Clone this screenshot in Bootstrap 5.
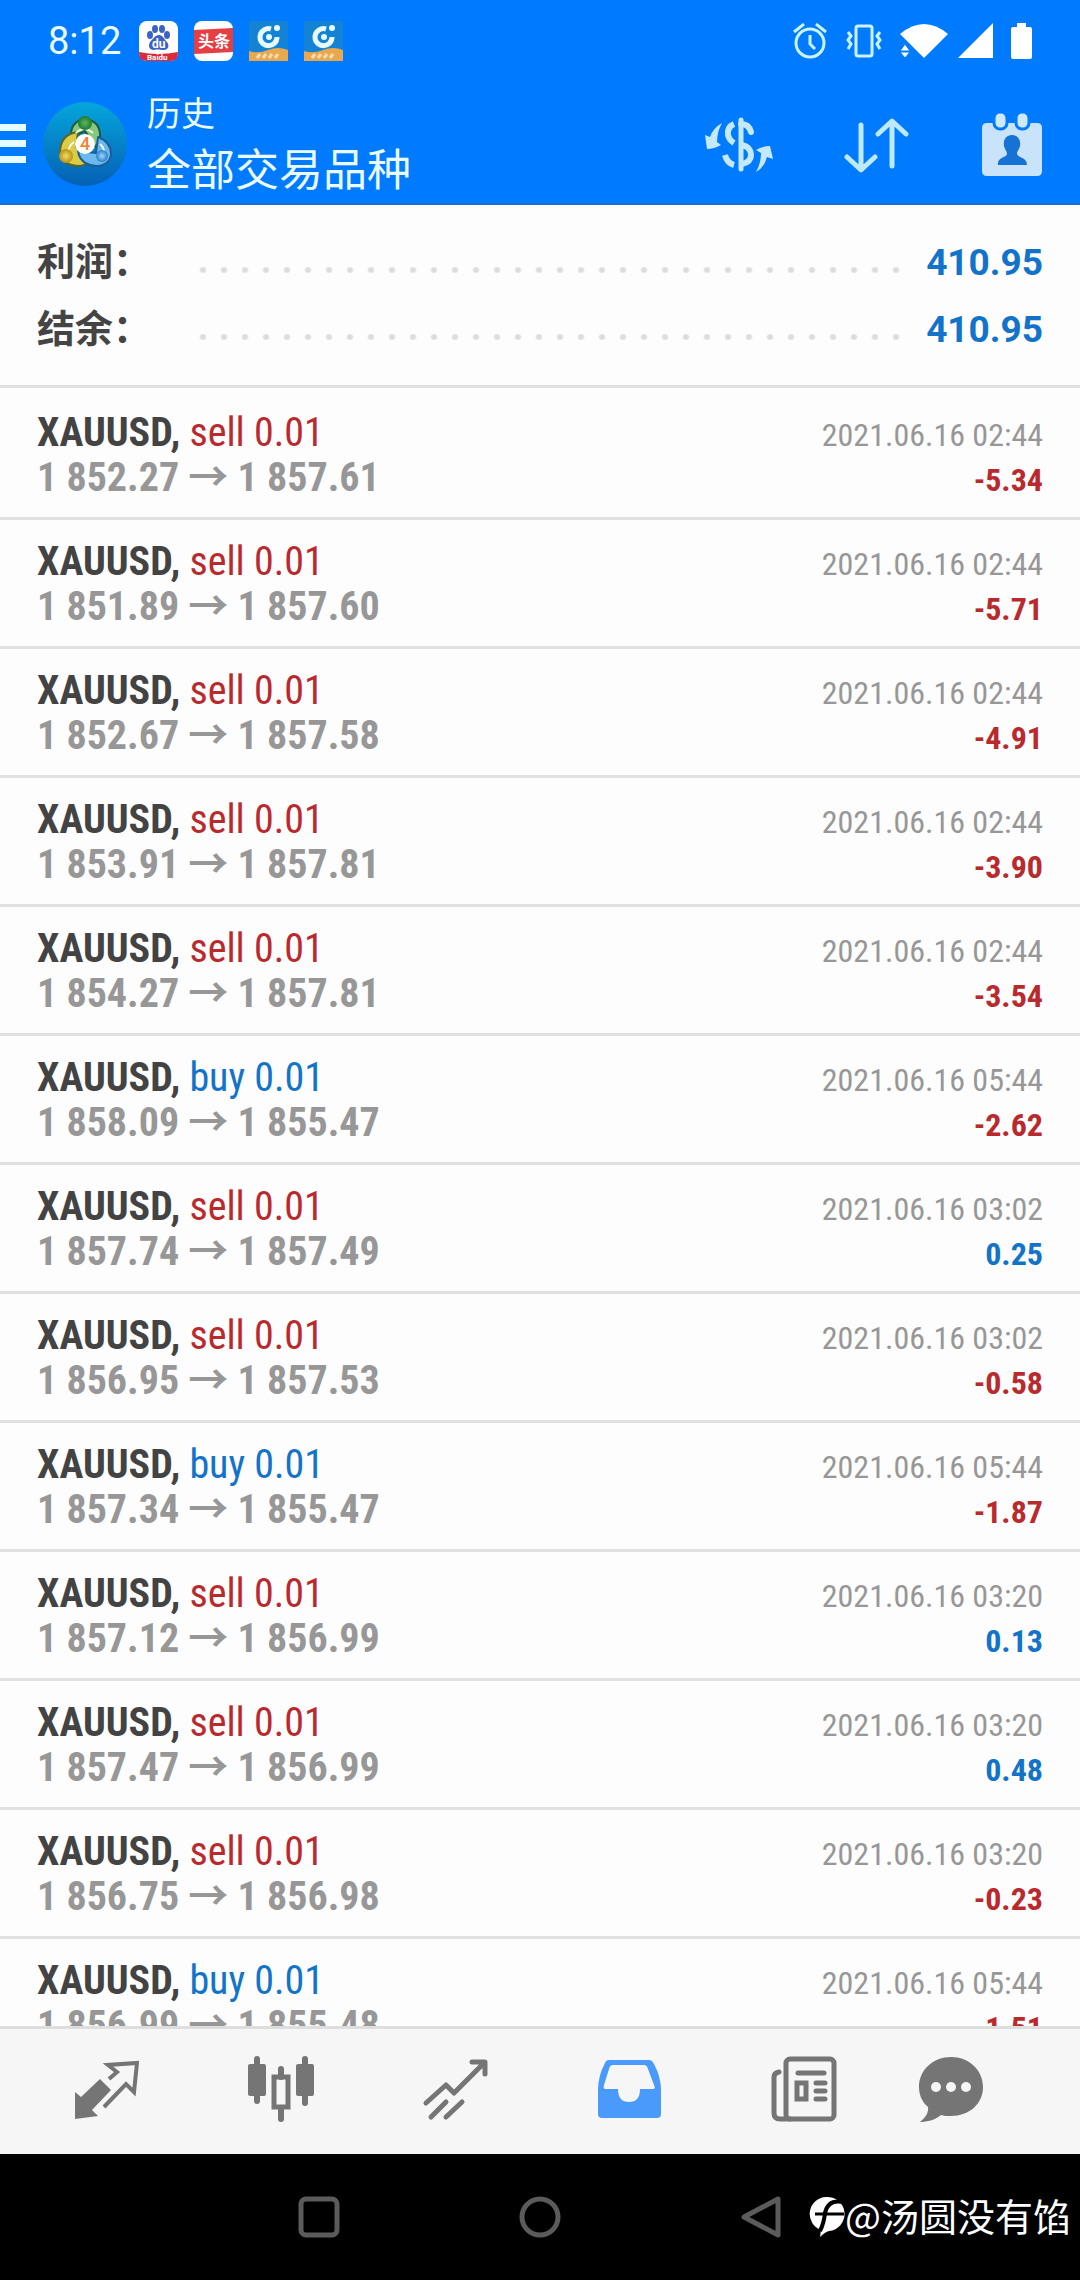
<!DOCTYPE html>
<html lang="zh-CN">
<head>
<meta charset="utf-8">
<meta name="viewport" content="width=device-width, initial-scale=1">
<title>历史 - 全部交易品种</title>
<link href="https://cdn.jsdelivr.net/npm/bootstrap@5.3.0/dist/css/bootstrap.min.css" rel="stylesheet">
<style>
:root{--app-blue:#007aff;--txt-blue:#1273c9;--txt-red:#b92a2e;--rule:#e1e1e1}
body{font-family:Roboto,"Noto Sans CJK SC",sans-serif;background:#000}
svg{display:block;flex:none}
.shell{height:100vh}
.app-top{background:var(--app-blue);border-bottom:2px solid #1b6fc4;color:#e9fbff}
.status-bar{height:80px;padding:2px 48px 0}
.clock{font-size:38px;line-height:44px;width:70px}
.notices{gap:16px;margin-left:21px}
.signals{gap:18px}
.signals .cell{margin-left:-8px}
.title-bar{padding:7px 38px 2px 0}
.title-bar .btn{border:0;border-radius:0;padding:0}
.small-title{font-size:34px;line-height:54px}
.big-title{font-size:44px;line-height:60px;font-weight:400}
.titles{margin-left:19px}
.tool-set{gap:70px}
.history{background:#fdfdfd;min-height:0}
.summary{padding:24px 37px 22px;border-bottom:3px solid var(--rule);margin-bottom:3px}
.sum-row{height:67px;font-size:38px;line-height:67px}
.sum-row dt{width:157px;color:#444;font-weight:700}
.sum-row dd{color:var(--txt-blue);font-weight:700;font-size:37px}
.dots{height:6px;margin-top:14px;margin-right:24px;background:radial-gradient(circle at 9px 3px,#dcdcdc 2px,transparent 4px) 0 0/21px 6px repeat-x}
.deal{height:129px;padding:19px 37px 0;border-bottom:3px solid var(--rule);font-family:"Roboto Condensed","Noto Sans CJK SC",sans-serif;font-size:40px;line-height:45px}
.deal>div{height:45px}
.symbol{color:#434343}
.prices{color:#979797}
.when{color:#979797;font-size:32px}
.gain{font-size:32px;font-weight:700}
.up{color:var(--txt-blue)}
.down{color:var(--txt-red)}
.tabs{height:128px;background:#f6f6f6;border-top:3px solid #dedede;padding:0 69px 6px 19px;color:#757575}
.tabs .btn{flex:174 1 0;min-width:0;padding:0;border:0;color:inherit}
.tabs .btn:last-child{flex-grow:120}
.tabs .btn.active{color:#4a9afc}
.system-bar{height:126px;gap:177px;background:#000}
.system-bar .btn{padding:0;border:0}
.credit{right:9px;bottom:38px;color:#fff;font-family:"Noto Sans CJK SC",sans-serif;font-size:38px;line-height:54px}
</style>
</head>
<body>
<div class="shell d-flex flex-column overflow-hidden">

<header class="app-top flex-shrink-0">
  <div class="status-bar d-flex align-items-center">
    <span class="clock">8:12</span>
    <div class="notices d-flex">
      <svg width="39" height="40" viewBox="0 0 39 40"><rect width="39" height="40" rx="8" fill="#fff"/><g fill="#3c62c4"><ellipse cx="11" cy="14" rx="3" ry="4"/><ellipse cx="16" cy="8" rx="3" ry="4"/><ellipse cx="23" cy="8" rx="3" ry="4"/><ellipse cx="28" cy="14" rx="3" ry="4"/><path d="M20 14c4 0 5 4 8 7 3 4 1 8-3 8-3 0-7-1-10 0-5 0-6-4-4-8 3-3 5-7 9-7z"/></g><text x="13" y="27" font-size="12" font-weight="700" fill="#fff">du</text><path d="M0 31q19 4 39 0v1q0 8-8 8H8q-8 0-8-8z" fill="#dd2a38"/><text x="8" y="39" font-size="8" font-weight="700" fill="#fff">Baidu</text></svg>
      <svg width="39" height="40" viewBox="0 0 39 40"><rect width="39" height="40" rx="8" fill="#fff"/><path d="M0 9 39 7v24L0 33z" fill="#e53e43"/><text x="4" y="26" font-size="16" font-weight="700" fill="#fff" font-family="Noto Sans CJK SC">头条</text></svg>
      <svg width="39" height="40" viewBox="0 0 39 40"><rect width="39" height="40" fill="#1483d6"/><path d="M22 8a8.500 8.500 0 1 0 6 8" fill="none" stroke="#e6fbff" stroke-width="5"/><circle cx="20" cy="16" r="3" fill="#e6fbff"/><circle cx="28" cy="7" r="3" fill="#e6fbff"/><path d="M0 30q9 3 19-1t20 0v11H0z" fill="#eaa84e"/><path d="M8 37l3-4m3 4l3-4m3 4l3-4m3 4l3-4" stroke="#f8ddb0" stroke-width="3"/></svg>
      <svg width="39" height="40" viewBox="0 0 39 40"><rect width="39" height="40" fill="#1483d6"/><path d="M22 8a8.500 8.500 0 1 0 6 8" fill="none" stroke="#e6fbff" stroke-width="5"/><circle cx="20" cy="16" r="3" fill="#e6fbff"/><circle cx="28" cy="7" r="3" fill="#e6fbff"/><path d="M0 30q9 3 19-1t20 0v11H0z" fill="#eaa84e"/><path d="M8 37l3-4m3 4l3-4m3 4l3-4m3 4l3-4" stroke="#f8ddb0" stroke-width="3"/></svg>
    </div>
    <div class="signals d-flex align-items-center ms-auto">
      <svg width="36" height="36" viewBox="0 0 36 36" fill="none" stroke="#c9f4ff" stroke-width="3"><circle cx="18" cy="20" r="14"/><path d="M18 12v9l5 5M2 9l10-8M34 9 24 1"/></svg>
      <svg width="36" height="36" viewBox="0 0 36 36" fill="none" stroke="#c9f4ff" stroke-width="3"><rect x="10" y="3" width="16" height="30" rx="2"/><path d="m2 9 3 4-3 4 3 4-3 5M34 9l-3 4 3 4-3 4 3 5"/></svg>
      <svg width="48" height="36" viewBox="0 0 48 36" fill="#fff"><path d="M0 11Q24-9 48 11L24 35z"/><path d="M0 28l5-7 5 7zM0 29h10l-5 6z" stroke="#007aff" stroke-width="1"/></svg>
      <svg class="cell" width="35" height="36" viewBox="0 0 35 36" fill="#fff"><path d="M35 0v35H0z"/></svg>
      <svg width="21" height="36" viewBox="0 0 21 36" fill="#fff"><path d="M6 0h9v4h4q2 0 2 2v28q0 2-2 2H2q-2 0-2-2V6q0-2 2-2h4z"/></svg>
    </div>
  </div>

  <div class="title-bar d-flex align-items-center">
    <button class="btn" type="button" aria-label="菜单"><svg width="26" height="40" viewBox="0 0 26 40" fill="#e4fbff"><path d="M0 0h26v7H0zM0 16h26v7H0zM0 32h26v7H0z"/></svg></button>
    <svg class="ms-3" width="86" height="86" viewBox="0 0 86 86">
      <defs>
        <linearGradient id="disc" x1="0" y1="0" x2="0" y2="1"><stop offset="0" stop-color="#05a6dc"/><stop offset="1" stop-color="#0560b4"/></linearGradient>
        <radialGradient id="gr"><stop offset="0" stop-color="#5fb558"/><stop offset="1" stop-color="#1c7a33"/></radialGradient>
        <radialGradient id="ye"><stop offset="0" stop-color="#f2dc6a"/><stop offset="1" stop-color="#b8920f"/></radialGradient>
        <radialGradient id="bl"><stop offset="0" stop-color="#9cd8ff"/><stop offset="1" stop-color="#2a80ca"/></radialGradient>
      </defs>
      <circle cx="43" cy="43" r="42" fill="url(#disc)"/>
      <g stroke-linejoin="round">
        <path d="M29 36Q28 21 42 18q15 1 16 15 1 9-4 13L43 30z" fill="#86c97c" stroke="#1d5a42" stroke-width="2"/>
        <path d="M36 31Q18 33 18 52q2 12 18 13 7 0 11-5L34 46z" fill="#dccb44" stroke="#5d6522" stroke-width="2"/>
        <path d="M36 50q2 14 19 15 13-1 14-12 0-12-13-17l-2 16z" fill="#6cb9ee" stroke="#1d5c96" stroke-width="2"/>
        <path d="M34 32q8-8 17 0M26 54q0-9 6-13M58 43q6 5 3 12" fill="none" stroke="#f3fbe8" stroke-width="2"/>
      </g>
      <circle cx="43" cy="22" r="7" fill="url(#gr)"/><circle cx="24" cy="55" r="7" fill="url(#ye)"/><circle cx="60" cy="55" r="6" fill="url(#bl)"/>
      <circle cx="43" cy="43" r="10" fill="#fff"/><text x="43" y="49" text-anchor="middle" font-size="18" font-weight="500" fill="#ee8434">4</text>
    </svg>
    <div class="titles">
      <div class="small-title">历史</div>
      <h1 class="big-title m-0">全部交易品种</h1>
    </div>
    <div class="tool-set d-flex ms-auto">
      <button class="btn" type="button" aria-label="交易品种"><svg width="70" height="64" viewBox="0 0 70 64"><g fill="none" stroke="#c4e9fb" stroke-width="6"><path d="M37 8v49" stroke-width="5" stroke-linecap="round"/><path d="M30 12q-7 3-6 11 1 5 6 8M30 53q-7-2-9-10"/><path d="M37 12q8 0 10 8M38 33q9 2 9 10 0 7-9 9" stroke-linecap="round"/></g><g fill="#c4e9fb"><path d="M18 11Q9 16 6 25l-5-2 2 14q7 0 14-4l-4-3q0-10 5-19zM52 60q8-4 11-15l6 2-3-13q-7 0-14 4l5 3q0 10-5 19z"/></g></svg></button>
      <button class="btn" type="button" aria-label="排序"><svg width="68" height="64" viewBox="0 0 68 64" fill="none" stroke="#bde9fb" stroke-width="5" stroke-linecap="round" stroke-linejoin="round"><path d="M17 13v44M3 45l14 13 14-13M48 54V10M34 22 48 9l14 13"/></svg></button>
      <button class="btn" type="button" aria-label="日期"><svg width="60" height="64" viewBox="0 0 60 64"><path d="M5 11h50q5 0 5 5v43q0 5-5 5H5q-5 0-5-5V16q0-5 5-5z" fill="#c9e3fa"/><g fill="#cdeafc" stroke="#007aff" stroke-width="3"><rect x="12" y="0" width="13" height="17" rx="6"/><rect x="34" y="0" width="13" height="17" rx="6"/></g><path d="M30 23c6 0 9 5 8 11-1 4-3 5-3 8 1 4 10 3 10 11H16c-1-8 8-7 9-11 0-3-2-4-3-8-1-6 2-11 8-11z" fill="#1672d3"/></svg></button>
    </div>
  </div>
</header>

<main class="history flex-grow-1 overflow-hidden">
  <dl class="summary">
    <div class="sum-row d-flex align-items-center"><dt>利润：</dt><div class="dots flex-grow-1"></div><dd class="mb-0">410.95</dd></div>
    <div class="sum-row d-flex align-items-center"><dt>结余：</dt><div class="dots flex-grow-1"></div><dd class="mb-0">410.95</dd></div>
  </dl>
  <ul class="list-unstyled mb-0">
    <li class="deal"><div class="d-flex justify-content-between align-items-baseline"><span><b class="symbol">XAUUSD,</b> <span class="down">sell 0.01</span></span><time class="when">2021.06.16 02:44</time></div><div class="d-flex justify-content-between align-items-baseline"><b class="prices">1 852.27 → 1 857.61</b><span class="gain down">-5.34</span></div></li>
    <li class="deal"><div class="d-flex justify-content-between align-items-baseline"><span><b class="symbol">XAUUSD,</b> <span class="down">sell 0.01</span></span><time class="when">2021.06.16 02:44</time></div><div class="d-flex justify-content-between align-items-baseline"><b class="prices">1 851.89 → 1 857.60</b><span class="gain down">-5.71</span></div></li>
    <li class="deal"><div class="d-flex justify-content-between align-items-baseline"><span><b class="symbol">XAUUSD,</b> <span class="down">sell 0.01</span></span><time class="when">2021.06.16 02:44</time></div><div class="d-flex justify-content-between align-items-baseline"><b class="prices">1 852.67 → 1 857.58</b><span class="gain down">-4.91</span></div></li>
    <li class="deal"><div class="d-flex justify-content-between align-items-baseline"><span><b class="symbol">XAUUSD,</b> <span class="down">sell 0.01</span></span><time class="when">2021.06.16 02:44</time></div><div class="d-flex justify-content-between align-items-baseline"><b class="prices">1 853.91 → 1 857.81</b><span class="gain down">-3.90</span></div></li>
    <li class="deal"><div class="d-flex justify-content-between align-items-baseline"><span><b class="symbol">XAUUSD,</b> <span class="down">sell 0.01</span></span><time class="when">2021.06.16 02:44</time></div><div class="d-flex justify-content-between align-items-baseline"><b class="prices">1 854.27 → 1 857.81</b><span class="gain down">-3.54</span></div></li>
    <li class="deal"><div class="d-flex justify-content-between align-items-baseline"><span><b class="symbol">XAUUSD,</b> <span class="up">buy 0.01</span></span><time class="when">2021.06.16 05:44</time></div><div class="d-flex justify-content-between align-items-baseline"><b class="prices">1 858.09 → 1 855.47</b><span class="gain down">-2.62</span></div></li>
    <li class="deal"><div class="d-flex justify-content-between align-items-baseline"><span><b class="symbol">XAUUSD,</b> <span class="down">sell 0.01</span></span><time class="when">2021.06.16 03:02</time></div><div class="d-flex justify-content-between align-items-baseline"><b class="prices">1 857.74 → 1 857.49</b><span class="gain up">0.25</span></div></li>
    <li class="deal"><div class="d-flex justify-content-between align-items-baseline"><span><b class="symbol">XAUUSD,</b> <span class="down">sell 0.01</span></span><time class="when">2021.06.16 03:02</time></div><div class="d-flex justify-content-between align-items-baseline"><b class="prices">1 856.95 → 1 857.53</b><span class="gain down">-0.58</span></div></li>
    <li class="deal"><div class="d-flex justify-content-between align-items-baseline"><span><b class="symbol">XAUUSD,</b> <span class="up">buy 0.01</span></span><time class="when">2021.06.16 05:44</time></div><div class="d-flex justify-content-between align-items-baseline"><b class="prices">1 857.34 → 1 855.47</b><span class="gain down">-1.87</span></div></li>
    <li class="deal"><div class="d-flex justify-content-between align-items-baseline"><span><b class="symbol">XAUUSD,</b> <span class="down">sell 0.01</span></span><time class="when">2021.06.16 03:20</time></div><div class="d-flex justify-content-between align-items-baseline"><b class="prices">1 857.12 → 1 856.99</b><span class="gain up">0.13</span></div></li>
    <li class="deal"><div class="d-flex justify-content-between align-items-baseline"><span><b class="symbol">XAUUSD,</b> <span class="down">sell 0.01</span></span><time class="when">2021.06.16 03:20</time></div><div class="d-flex justify-content-between align-items-baseline"><b class="prices">1 857.47 → 1 856.99</b><span class="gain up">0.48</span></div></li>
    <li class="deal"><div class="d-flex justify-content-between align-items-baseline"><span><b class="symbol">XAUUSD,</b> <span class="down">sell 0.01</span></span><time class="when">2021.06.16 03:20</time></div><div class="d-flex justify-content-between align-items-baseline"><b class="prices">1 856.75 → 1 856.98</b><span class="gain down">-0.23</span></div></li>
    <li class="deal"><div class="d-flex justify-content-between align-items-baseline"><span><b class="symbol">XAUUSD,</b> <span class="up">buy 0.01</span></span><time class="when">2021.06.16 05:44</time></div><div class="d-flex justify-content-between align-items-baseline"><b class="prices">1 856.99 → 1 855.48</b><span class="gain down">-1.51</span></div></li>
  </ul>
</main>

<nav class="tabs d-flex flex-shrink-0" aria-label="主导航">
  <button class="btn d-flex align-items-center justify-content-center" type="button" aria-label="行情"><svg width="66" height="66" viewBox="0 0 66 66"><path d="M2 36l6 5 19-18 11 11-19 20 6 6-23 3z" fill="currentColor"/><path d="M36 23l8-7-9-7 29-2-3 29-8-8-22 23" fill="none" stroke="currentColor" stroke-width="4"/></svg></button>
  <button class="btn d-flex align-items-center justify-content-center" type="button" aria-label="图表"><svg width="66" height="66" viewBox="0 0 66 66"><g fill="currentColor"><rect y="8" width="18" height="32" rx="2"/><rect x="48" y="8" width="18" height="32" rx="2"/></g><g fill="none" stroke="currentColor" stroke-width="6" stroke-linecap="round"><path d="M9 3v42M57 3v44M33 13v8M33 54v9"/><rect x="26" y="21" width="14" height="30" stroke-width="5"/></g></svg></button>
  <button class="btn d-flex align-items-center justify-content-center" type="button" aria-label="交易"><svg width="66" height="66" viewBox="0 0 66 66" fill="none" stroke="currentColor" stroke-width="5" stroke-linecap="round" stroke-linejoin="round"><path d="M4 47 24 29l8 8L62 7M50 6h13v12M9 61l15-15M24 61l16-15"/></svg></button>
  <button class="btn active bg-transparent d-flex align-items-center justify-content-center" type="button" aria-label="历史"><svg width="66" height="66" viewBox="0 0 66 66"><path fill-rule="evenodd" fill="currentColor" d="M13 4h40q3 0 5 4 7 13 7 26v24q0 4-4 4H6q-4 0-4-4V34Q2 20 9 7q1-3 4-3zm4 5q-3 0-4 4L8 29q-1 4 1 4h13q0 13 11 13t11-13h13q3 0 1-4l-6-16q-1-4-4-4z"/></svg></button>
  <button class="btn d-flex align-items-center justify-content-center" type="button" aria-label="新闻"><svg width="66" height="66" viewBox="0 0 66 66" fill="none" stroke="currentColor" stroke-width="5" stroke-linecap="round"><rect x="15" y="3" width="48" height="60" rx="4"/><path d="M8 16q-5 1-5 5v36q0 6 6 6h10M27 17h26"/><rect x="26" y="27" width="9" height="16"/><path d="M45 27h9M45 35h9M45 43h9"/></svg></button>
  <button class="btn d-flex align-items-center justify-content-center" type="button" aria-label="消息"><svg width="66" height="66" viewBox="0 0 66 66"><path d="M33 1c18 0 32 13 32 30S51 60 33 60c-4 0-7 0-10-1-6 5-14 7-21 7 5-4 9-9 8-15C4 46 1 39 1 31 1 14 15 1 33 1z" fill="currentColor"/><g fill="#f6f6f6"><circle cx="18" cy="31" r="5"/><circle cx="33" cy="31" r="5"/><circle cx="48" cy="31" r="5"/></g></svg></button>
</nav>

<footer class="system-bar position-relative d-flex align-items-center justify-content-center flex-shrink-0">
  <button class="btn" type="button" aria-label="最近任务"><svg width="44" height="44" viewBox="0 0 44 44" fill="none" stroke="#5b5b5b" stroke-width="5"><rect x="4" y="4" width="36" height="36" rx="5"/></svg></button>
  <button class="btn" type="button" aria-label="主屏幕"><svg width="44" height="44" viewBox="0 0 44 44" fill="none" stroke="#5b5b5b" stroke-width="5"><circle cx="22" cy="22" r="18"/></svg></button>
  <button class="btn" type="button" aria-label="返回"><svg width="44" height="44" viewBox="0 0 44 44" fill="none" stroke="#5b5b5b" stroke-width="5" stroke-linejoin="round"><path d="M39 4v36L5 22z"/></svg></button>
  <div class="credit position-absolute d-flex align-items-center">
    <svg width="37" height="44" viewBox="0 0 37 44"><path d="M18 4a17 17 0 0 1 3 34q-4 1-9 6l1-7A17 17 0 0 1 18 4z" fill="#fff"/><path d="M35 9q-15-3-18 11-1 10-5 18" fill="none" stroke="#000" stroke-width="4"/><path d="M7 21h29" stroke="#000" stroke-width="3"/></svg>
    <span>@汤圆没有馅</span>
  </div>
</footer>
</div>
<script src="https://cdn.jsdelivr.net/npm/bootstrap@5.3.0/dist/js/bootstrap.bundle.min.js"></script>
</body>
</html>
